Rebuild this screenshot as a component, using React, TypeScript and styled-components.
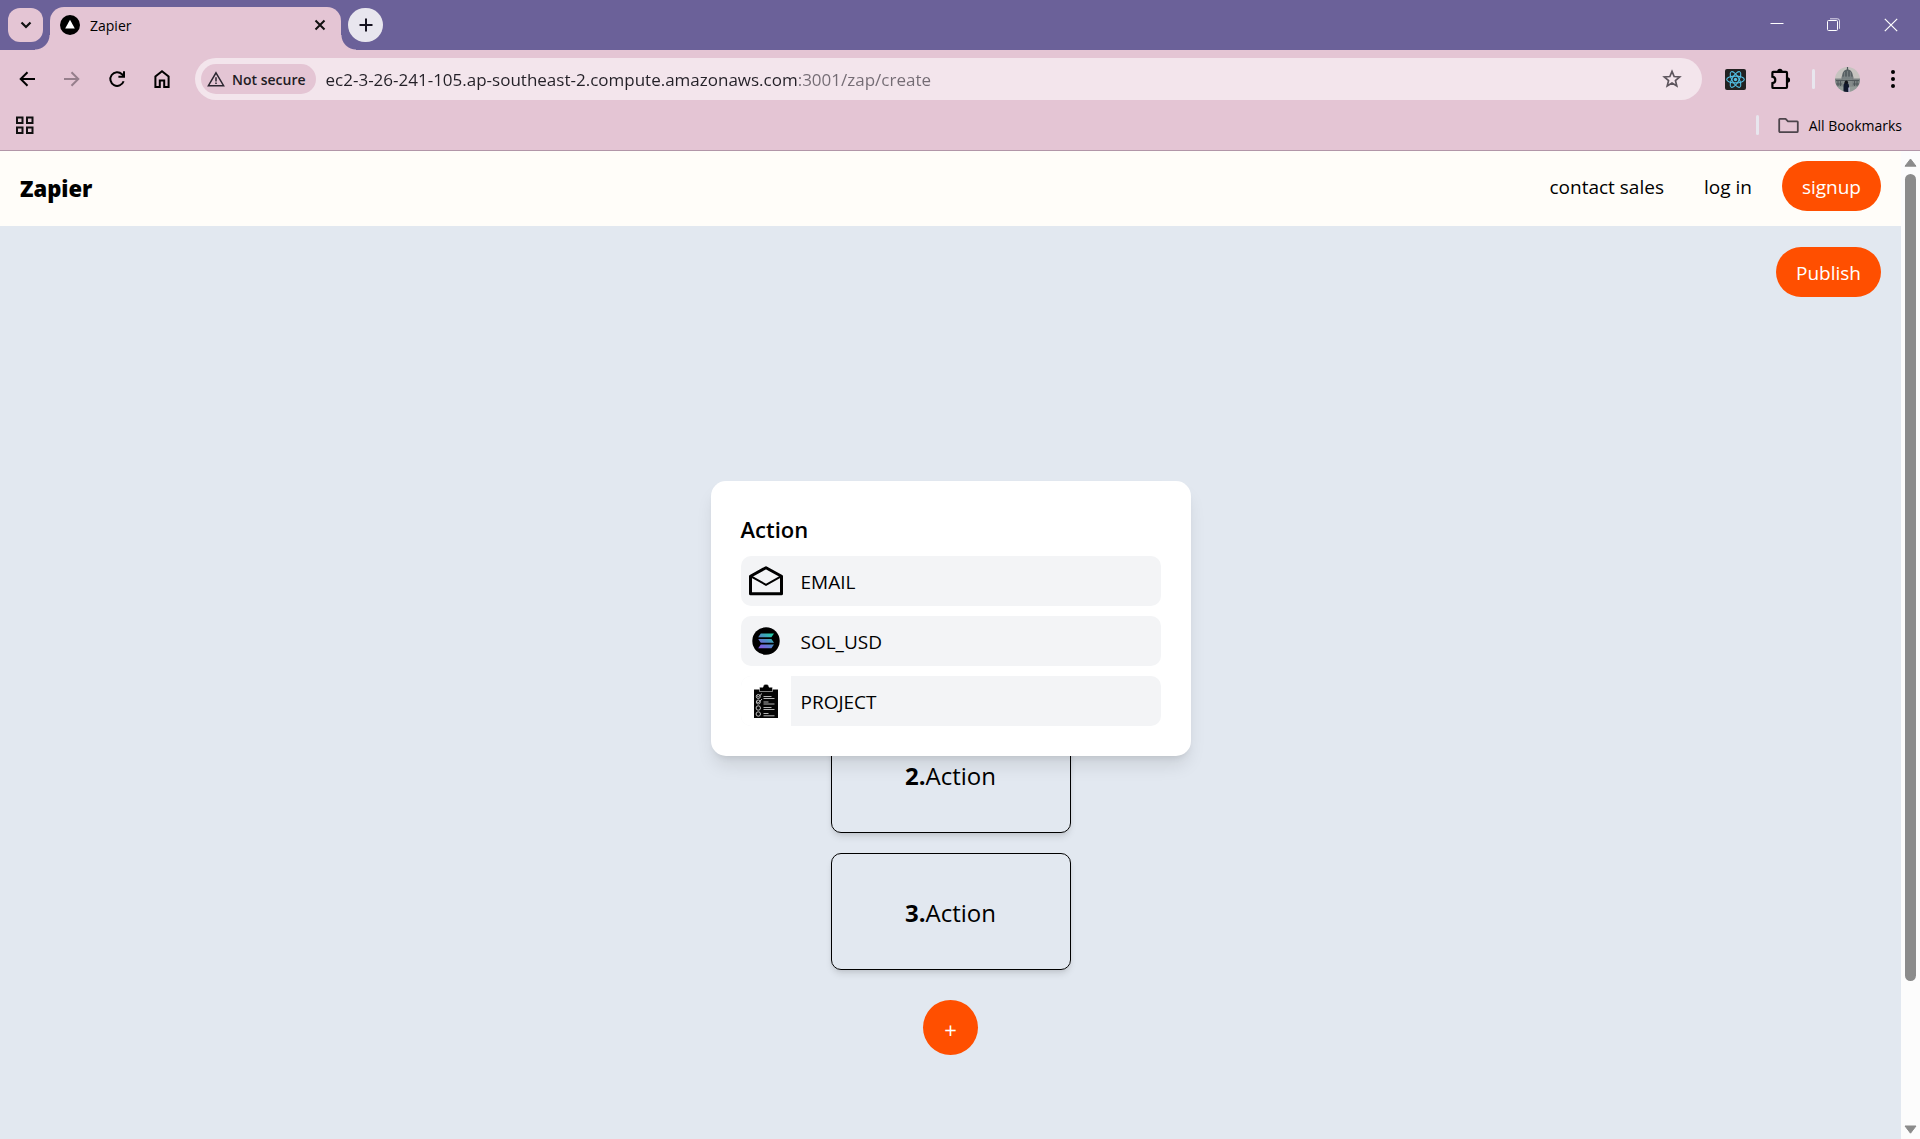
import React from "react";
import styled, { createGlobalStyle } from "styled-components";

const GlobalStyle = createGlobalStyle`
  *, *::before, *::after { box-sizing: border-box; }
  body {
    margin: 0;
    font-family: "Segoe UI", "Open Sans", "Noto Sans", sans-serif;
    color: #000;
  }
  button {
    font: inherit;
    color: inherit;
    border: 0;
    padding: 0;
    background: none;
    cursor: pointer;
  }
  h2, ul { margin: 0; padding: 0; }
  svg { display: block; flex: none; }
`;

const Window = styled.div`
  display: flex;
  flex-direction: column;
  min-height: 100vh;
`;

/* ---------- title strip ---------- */

const TitleStrip = styled.div`
  display: flex;
  align-items: flex-end;
  height: 50px;
  padding: 0 1px 0 8px;
  background: #6b6199;
`;

const StripButton = styled.button<{ $round?: boolean }>`
  display: grid;
  place-items: center;
  width: 35px;
  height: 34px;
  margin-bottom: 8px;
  border-radius: ${(p) => (p.$round ? "18px" : "12px")};
  background: ${(p) => (p.$round ? "#e8e6ee" : "#e4c5d4")};
`;

const Tab = styled.div`
  position: relative;
  display: flex;
  align-items: center;
  gap: 10px;
  width: 291px;
  height: 43px;
  margin: 0 7px;
  padding: 0 10px 7px;
  border-radius: 14px 14px 0 0;
  background: #e4c5d4;
  font-size: 14px;

  &::before,
  &::after {
    content: "";
    position: absolute;
    bottom: 0;
    width: 15px;
    height: 15px;
  }
  &::before {
    right: 100%;
    background: radial-gradient(circle at 0 0, transparent 14px, #e4c5d4 15px);
  }
  &::after {
    left: 100%;
    background: radial-gradient(circle at 100% 0, transparent 14px, #e4c5d4 15px);
  }
`;

const TabTitle = styled.span`
  flex: 1;
`;

const TabClose = styled.button`
  display: grid;
  place-items: center;
  width: 22px;
  height: 22px;
`;

const WindowControls = styled.div`
  display: flex;
  align-self: stretch;
  margin-left: auto;
`;

const WindowButton = styled.button`
  display: grid;
  place-items: center;
  width: 57px;
`;

/* ---------- toolbar ---------- */

const Toolbar = styled.div`
  display: flex;
  align-items: center;
  height: 58px;
  padding: 0 5px 0 4px;
  background: #e4c5d4;
`;

const ToolButton = styled.button`
  display: grid;
  place-items: center;
  width: 45px;
  height: 42px;
`;

const Omnibox = styled.form`
  display: flex;
  flex: 1;
  align-items: center;
  height: 42px;
  margin: 0 11px;
  padding: 0 8px 0 6px;
  border-radius: 21px;
  background: #f3e5ec;
`;

const SecurityChip = styled.button`
  display: flex;
  align-items: center;
  gap: 7px;
  height: 30px;
  padding: 0 10px 0 6px;
  border-radius: 15px;
  background: #e4c5d4;
  color: #1f1c24;
  font-size: 14px;
  font-weight: 600;
`;

const UrlInput = styled.input`
  flex: 1;
  min-width: 0;
  height: 30px;
  padding: 0 0 0 10px;
  border: 0;
  outline: 0;
  font: inherit;
  font-size: 17px;
  color: #232027;
  background: linear-gradient(90deg, #232027 482px, #736b73 482px);
  -webkit-background-clip: text;
  background-clip: text;
  -webkit-text-fill-color: transparent;
`;

const Divider = styled.span`
  width: 3px;
  height: 20px;
  margin: 0 10px 0 9px;
  border-radius: 2px;
  background: #e8e6ee;
`;

const BookmarksBar = styled.div`
  display: flex;
  align-items: center;
  height: 43px;
  padding: 0 18px 8px 15px;
  border-bottom: 1px solid #b296a8;
  background: #e4c5d4;
`;

const AppsButton = styled.button`
  margin-right: auto;
`;

const AllBookmarks = styled.button`
  display: flex;
  align-items: center;
  gap: 10px;
  margin-left: 9px;
  font-size: 14px;
`;

/* ---------- page ---------- */

const Viewport = styled.div`
  display: flex;
  flex: 1;
`;

const Page = styled.div`
  display: flex;
  flex: 1;
  flex-direction: column;
`;

const NavBar = styled.header`
  display: flex;
  align-items: flex-start;
  justify-content: space-between;
  height: 75px;
  padding: 10px 20px;
  background: #fffdf9;
`;

const Brand = styled.div`
  font-size: 22px;
  font-weight: 800;
  line-height: 54px;
`;

const NavLinks = styled.nav`
  display: flex;
  gap: 10px;
`;

const NavLink = styled.a`
  padding: 0 10px;
  color: #000;
  font-size: 19px;
  line-height: 52px;
  text-decoration: none;

  & + & {
    padding: 0 20px;
  }
`;

const PillButton = styled.button`
  height: 50px;
  padding: 2px 20px 0;
  border-radius: 25px;
  background: #ff4f00;
  color: #fff;
  font-size: 19px;
`;

const Canvas = styled.main`
  position: relative;
  flex: 1;
  background: #e2e8f0;
`;

const PublishRow = styled.div`
  display: flex;
  justify-content: flex-end;
  padding: 21px 20px 0;
`;

const Flow = styled.div`
  display: flex;
  flex-direction: column;
  align-items: center;
  gap: 20px;
  padding: 419px 0 84px;
`;

const StepCard = styled.button`
  width: 240px;
  height: 117px;
  padding-top: 2px;
  border: 1px solid #000;
  border-radius: 10px;
  box-shadow: 0 5px 7px -1px rgba(0, 0, 0, 0.1), 0 2px 5px -2px rgba(0, 0, 0, 0.1);
  font-size: 24px;
`;

const AddButton = styled.button`
  width: 55px;
  height: 55px;
  margin-top: 10px;
  padding-top: 2px;
  border-radius: 50%;
  background: #ff4f00;
  color: #fff;
  font-size: 22px;
`;

const ModalLayer = styled.div`
  position: absolute;
  inset: 0;
  display: flex;
  align-items: flex-start;
  justify-content: center;
  padding-top: 255px;
  pointer-events: none;
`;

const Modal = styled.section`
  width: 480px;
  padding: 30px;
  border-radius: 15px;
  background: #fff;
  box-shadow: 0 12px 18px -3px rgba(0, 0, 0, 0.1), 0 5px 7px -4px rgba(0, 0, 0, 0.1);
  pointer-events: auto;
`;

const ModalTitle = styled.h2`
  margin-bottom: 8px;
  font-size: 22px;
  font-weight: 600;
  line-height: 37px;
`;

const Options = styled.ul`
  display: grid;
  gap: 10px;
  list-style: none;
`;

const Option = styled.button`
  display: flex;
  align-items: center;
  width: 100%;
  height: 50px;
  overflow: hidden;
  border-radius: 10px;
  background: #f3f4f6;
  font-size: 19px;
  line-height: 52px;
`;

const OptionIcon = styled.span<{ $opaque?: boolean }>`
  display: grid;
  place-items: center;
  width: 50px;
  height: 50px;
  margin-right: 10px;
  background: ${(p) => (p.$opaque ? "#fff" : "transparent")};
`;

const OptionName = styled.span`
  padding-top: 2px;
`;

/* ---------- scrollbar ---------- */

const ScrollTrack = styled.div`
  display: flex;
  flex-direction: column;
  align-items: center;
  gap: 7px;
  width: 19px;
  padding: 7px 0 5px;
  background: #fcfcfc;
`;

const ScrollLane = styled.div`
  flex: 1;
  width: 11px;
`;

const ScrollThumb = styled.div`
  height: 85.5%;
  border-radius: 6px;
  background: #8b8b8b;
`;

/* ---------- drawings ---------- */

const ChevronIcon = () => (
  <svg width="16" height="16" viewBox="0 0 16 16" fill="none" stroke="#111" strokeWidth="2.2">
    <path d="M3.5 5.5 8 10l4.5-4.5" />
  </svg>
);

const FaviconIcon = () => (
  <svg width="20" height="20" viewBox="0 0 20 20">
    <circle cx="10" cy="10" r="10" fill="#000" />
    <path d="M10 4.8 14.8 13.6H5.2Z" fill="#fff" />
  </svg>
);

const CloseIcon = () => (
  <svg width="12" height="12" viewBox="0 0 12 12" stroke="#111" strokeWidth="2">
    <path d="M1.5 1.5l9 9M10.5 1.5l-9 9" />
  </svg>
);

const PlusIcon = () => (
  <svg width="14" height="14" viewBox="0 0 14 14" stroke="#15121f" strokeWidth="2">
    <path d="M7 .5v13M.5 7h13" />
  </svg>
);

const MinimizeIcon = () => (
  <svg width="14" height="14" viewBox="0 0 14 14" stroke="#fff">
    <path d="M.5 5.500h13" />
  </svg>
);

const RestoreIcon = () => (
  <svg width="14" height="14" viewBox="0 0 14 14" fill="none" stroke="#fff">
    <rect x=".5" y="2.500" width="10" height="10" rx="1" />
    <path d="M3 .8h7.500a2 2 0 0 1 2 2v8" stroke="#ddd9ea" />
  </svg>
);

const WindowCloseIcon = () => (
  <svg width="14" height="14" viewBox="0 0 14 14" stroke="#fff" strokeWidth="1.2">
    <path d="M.8.8l12.400 12.400M13.200.8.8 13.200" />
  </svg>
);

const ArrowIcon = ({ forward }: { forward?: boolean }) => (
  <svg width="16" height="16" viewBox="0 0 16 16" fill="none" stroke={forward ? "#967f8c" : "#000"} strokeWidth="2">
    {forward ? <path d="M0 8h14M7.500 1.200 14.300 8l-6.800 6.800" /> : <path d="M16 8H2M8.500 1.200 1.700 8l6.800 6.800" />}
  </svg>
);

const ReloadIcon = () => (
  <svg width="18" height="18" viewBox="0 0 18 18" fill="none" stroke="#000" strokeWidth="2">
    <path d="M15.600 11.200A6.800 6.800 0 1 1 14 4.300l1.400 1.500" />
    <path d="M16 1.200v5.600h-5.600" />
  </svg>
);

const HomeIcon = () => (
  <svg width="18" height="20" viewBox="0 0 18 20" fill="none" stroke="#000" strokeWidth="2">
    <path d="M2.400 18V7.500L9 2.300l6.600 5.200V18h-4.400v-6.400H6.800V18Z" />
  </svg>
);

const WarningIcon = () => (
  <svg width="18" height="16" viewBox="0 0 18 16" fill="none" stroke="#2b2730" strokeWidth="1.500">
    <path d="M9 1.800 16.600 14.700H1.400Z" />
    <path d="M9 6.200v4.300M9 11.600v1.500" />
  </svg>
);

const StarIcon = () => (
  <svg width="20" height="20" viewBox="0 0 20 20" fill="none" stroke="#5d555d" strokeWidth="1.700">
    <path d="M10 2.400l2.150 5.150 5.550.45-4.250 3.600 1.350 5.450L10 14.100l-4.800 2.950 1.350-5.450L2.300 8l5.550-.45Z" />
  </svg>
);

const ReactIcon = () => (
  <svg width="21" height="21" viewBox="0 0 21 21" fill="none" stroke="#53c1e6" strokeWidth="1.100">
    <rect width="21" height="21" rx="2" fill="#222" stroke="none" />
    <ellipse cx="10.500" cy="10.500" rx="8.800" ry="3.400" />
    <ellipse cx="10.500" cy="10.500" rx="8.800" ry="3.400" transform="rotate(60 10.500 10.500)" />
    <ellipse cx="10.500" cy="10.500" rx="8.800" ry="3.400" transform="rotate(120 10.500 10.500)" />
    <circle cx="10.500" cy="10.500" r="1.700" fill="#53c1e6" stroke="none" />
  </svg>
);

const PuzzleIcon = () => (
  <svg width="22" height="22" viewBox="0 0 22 22">
    <path
      d="M3.200 3.900H16a1 1 0 0 1 1 1V19a1 1 0 0 1-1 1H3.200a.8.800 0 0 1-.8-.8v-4.100c1.800-.3 2.900-1.600 2.900-3.200S4.200 9 2.400 8.700V4.700a.8.800 0 0 1 .8-.8Z"
      fill="none"
      stroke="#000"
      strokeWidth="2.200"
    />
    <path d="M7.200 3.400a2.700 2.700 0 0 1 5.400 0ZM17.500 9.300a2.600 2.600 0 0 1 0 5.200Z" fill="#000" />
  </svg>
);

const AvatarIcon = () => (
  <svg width="25" height="25" viewBox="0 0 25 25">
    <defs>
      <clipPath id="avatar-disc">
        <circle cx="12.500" cy="12.500" r="12.500" />
      </clipPath>
    </defs>
    <g clipPath="url(#avatar-disc)">
      <rect width="25" height="25" fill="#c6c3bf" />
      <rect y="11.500" width="25" height="8.500" fill="#7c8383" />
      <path d="M12.500 0v3" stroke="#4f5659" strokeWidth="1.200" />
      <path d="M7 10.500C7 5 9.500 2.500 12.500 2.500S18 5 18 10.500Z" fill="#596164" />
      <path d="M6.500 9.500h12v3h-12Z" fill="#767d7e" />
      <path d="M8 12.500h9V19H8Z" fill="#848b8a" />
      <path d="M1 13.500h23M1 17h6M18 17h6M3 14v5M5.500 14v5M19.500 14v5M22 14v5" stroke="#4d5558" strokeWidth=".9" />
      <path d="M9.500 5v5M12.500 4v6M15.500 5v5M8 11h9" stroke="#858c8c" strokeWidth=".7" />
      <rect y="19.500" width="25" height="6" fill="#939b98" />
      <path d="M8.500 25v-6c0-2 .8-3.400 2.500-3.400s3 1.400 3 3.400v6Z" fill="#11182c" />
      <circle cx="11.300" cy="15.300" r="1.700" fill="#14141a" />
      <path d="M13.300 20.500h1.400V25h-1.400Z" fill="#b8b4d4" />
    </g>
  </svg>
);

const MenuDotsIcon = () => (
  <svg width="6" height="20" viewBox="0 0 6 20">
    <circle cx="3" cy="3" r="2" />
    <circle cx="3" cy="10" r="2" />
    <circle cx="3" cy="17" r="2" />
  </svg>
);

const GridIcon = () => (
  <svg width="20" height="20" viewBox="0 0 20 20" fill="none" stroke="#111" strokeWidth="2">
    <path d="M2 2.500h5.500v5.500H2ZM12 2.500h5.500v5.500H12ZM2 12.500h5.500v5.500H2ZM12 12.500h5.500v5.500H12Z" />
  </svg>
);

const FolderIcon = () => (
  <svg width="21" height="17" viewBox="0 0 21 17" fill="none" stroke="#4d454c" strokeWidth="1.800" strokeLinejoin="round">
    <path d="M1.800 1.800h5.800l2.400 2.500h9.200a.6.600 0 0 1 .6.600v9.300a1 1 0 0 1-1 1h-17a1 1 0 0 1-.6-1V2.400a.6.600 0 0 1 .6-.6Z" />
  </svg>
);

const EnvelopeIcon = () => (
  <svg width="36" height="32" viewBox="0 0 36 32" fill="none" stroke="#000">
    <path d="M2.500 11.200 18 2.700l15.500 8.500v17.600h-31Z" strokeWidth="3" strokeLinejoin="round" />
    <path d="M2.500 11.200 18 19.800l15.500-8.600" strokeWidth="2" />
  </svg>
);

const SolanaIcon = () => (
  <svg width="28" height="28" viewBox="0 0 28 28">
    <defs>
      <linearGradient id="solana" gradientUnits="userSpaceOnUse" x1="8" y1="22" x2="20" y2="6">
        <stop offset="0" stopColor="#8a52e8" />
        <stop offset=".5" stopColor="#5089c6" />
        <stop offset="1" stopColor="#20d3a4" />
      </linearGradient>
    </defs>
    <circle cx="14" cy="14" r="13.700" fill="#000" />
    <path
      d="M8.800 6.600H22L19.400 10.300H6.200ZM6.200 12.100h13.200l2.600 3.700H8.800ZM8.800 17.600H22l-2.600 3.700H6.200Z"
      fill="url(#solana)"
    />
  </svg>
);

const ClipboardIcon = () => (
  <svg width="26" height="36" viewBox="0 0 26 36" fill="none">
    <path d="M1 6.500h24V35H1Z" fill="#050505" />
    <path d="M6.500 8.500V4.200H10a3 3 0 0 1 6 0h3.500v4.300Z" fill="#000" stroke="#fff" strokeWidth=".5" />
    <path d="M10.500 13.500h8M10.500 15.500h11M10.500 19h5M10.500 21h11M10.500 24.500h8M10.500 26.500h11M10.500 30.500h5M10.500 32.800h11" stroke="#c9c9c9" strokeWidth=".9" />
    <g stroke="#d0d0d0" strokeWidth=".9">
      <circle cx="5.300" cy="13.500" r="2" />
      <circle cx="5.300" cy="19" r="2" />
      <circle cx="5.300" cy="25" r="2.200" />
      <circle cx="5.300" cy="31" r="2.200" />
      <path d="M4 12.500l1.300 1.500L9 10.500M4 18.500l1.300 1.500L9 16" />
    </g>
  </svg>
);

const ScrollArrow = ({ down }: { down?: boolean }) => (
  <svg width="13" height="9" viewBox="0 0 13 9" fill="#8b8b8b" stroke="#8b8b8b" strokeLinejoin="round">
    <path d={down ? "M1 1h11L6.500 8.200Z" : "M1 8.200h11L6.500 1Z"} />
  </svg>
);

/* ---------- app ---------- */

const options = [
  { name: "EMAIL", icon: <EnvelopeIcon /> },
  { name: "SOL_USD", icon: <SolanaIcon /> },
  { name: "PROJECT", icon: <ClipboardIcon />, opaque: true },
];

const steps = [
  { order: 2, name: "Action" },
  { order: 3, name: "Action" },
];

const BrowserChrome = () => (
  <>
    <TitleStrip>
      <StripButton aria-label="Search tabs"><ChevronIcon /></StripButton>
      <Tab>
        <FaviconIcon />
        <TabTitle>Zapier</TabTitle>
        <TabClose aria-label="Close tab"><CloseIcon /></TabClose>
      </Tab>
      <StripButton $round aria-label="New tab"><PlusIcon /></StripButton>
      <WindowControls>
        <WindowButton aria-label="Minimize"><MinimizeIcon /></WindowButton>
        <WindowButton aria-label="Restore"><RestoreIcon /></WindowButton>
        <WindowButton aria-label="Close window"><WindowCloseIcon /></WindowButton>
      </WindowControls>
    </TitleStrip>
    <Toolbar>
      <ToolButton aria-label="Back"><ArrowIcon /></ToolButton>
      <ToolButton aria-label="Forward"><ArrowIcon forward /></ToolButton>
      <ToolButton aria-label="Reload"><ReloadIcon /></ToolButton>
      <ToolButton aria-label="Home"><HomeIcon /></ToolButton>
      <Omnibox onSubmit={(e) => e.preventDefault()}>
        <SecurityChip type="button"><WarningIcon />Not secure</SecurityChip>
        <UrlInput
          aria-label="Address"
          defaultValue="ec2-3-26-241-105.ap-southeast-2.compute.amazonaws.com:3001/zap/create"
        />
        <ToolButton type="button" aria-label="Bookmark this page"><StarIcon /></ToolButton>
      </Omnibox>
      <ToolButton aria-label="React Developer Tools"><ReactIcon /></ToolButton>
      <ToolButton aria-label="Extensions"><PuzzleIcon /></ToolButton>
      <Divider />
      <ToolButton aria-label="Profile"><AvatarIcon /></ToolButton>
      <ToolButton aria-label="Menu"><MenuDotsIcon /></ToolButton>
    </Toolbar>
    <BookmarksBar>
      <AppsButton aria-label="Apps"><GridIcon /></AppsButton>
      <Divider />
      <AllBookmarks><FolderIcon />All Bookmarks</AllBookmarks>
    </BookmarksBar>
  </>
);

export default function App() {
  return (
    <>
      <GlobalStyle />
      <Window>
        <BrowserChrome />
        <Viewport>
          <Page>
            <NavBar>
              <Brand>Zapier</Brand>
              <NavLinks>
                <NavLink href="#contact">contact sales</NavLink>
                <NavLink href="#login">log in</NavLink>
                <PillButton>signup</PillButton>
              </NavLinks>
            </NavBar>
            <Canvas>
              <PublishRow>
                <PillButton>Publish</PillButton>
              </PublishRow>
              <Flow>
                {steps.map((step) => (
                  <StepCard key={step.order}>
                    <b>{step.order}.</b>{step.name}
                  </StepCard>
                ))}
                <AddButton>+</AddButton>
              </Flow>
              <ModalLayer>
                <Modal aria-labelledby="modal-title">
                  <ModalTitle id="modal-title">Action</ModalTitle>
                  <Options>
                    {options.map((option) => (
                      <li key={option.name}>
                        <Option>
                          <OptionIcon $opaque={option.opaque}>{option.icon}</OptionIcon>
                          <OptionName>{option.name}</OptionName>
                        </Option>
                      </li>
                    ))}
                  </Options>
                </Modal>
              </ModalLayer>
            </Canvas>
          </Page>
          <ScrollTrack>
            <ScrollArrow />
            <ScrollLane><ScrollThumb /></ScrollLane>
            <ScrollArrow down />
          </ScrollTrack>
        </Viewport>
      </Window>
    </>
  );
}
